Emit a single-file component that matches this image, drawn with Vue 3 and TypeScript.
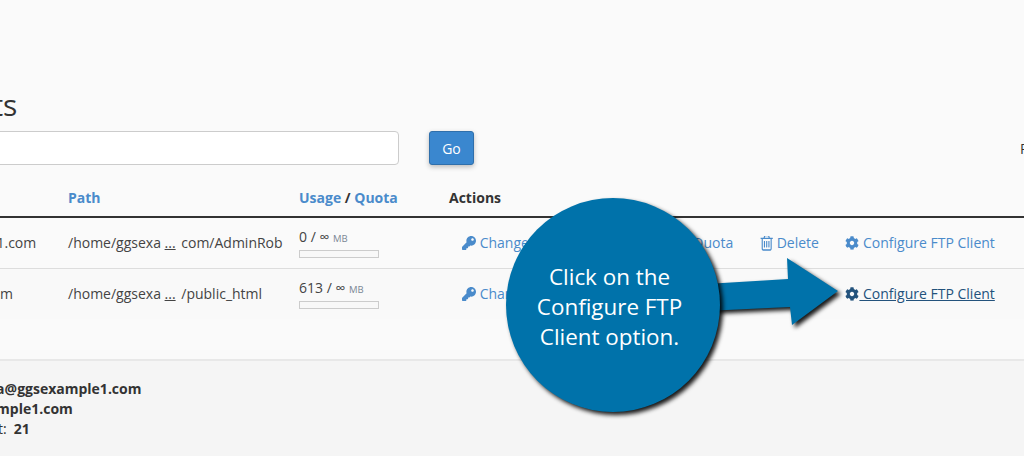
<template>
  <div class="page">
    <div class="content">
      <h1>FTP Accounts</h1>
      <div class="toolbar">
        <input class="search" type="text" />
        <button class="go">Go</button>
        <span class="page-size">Page Size</span>
      </div>
      <table>
        <colgroup>
          <col class="c-login" />
          <col class="c-path" />
          <col class="c-usage" />
          <col />
        </colgroup>
        <thead>
          <tr>
            <th><a>Log In</a></th>
            <th><a>Path</a></th>
            <th><a>Usage</a> / <a>Quota</a></th>
            <th>Actions</th>
          </tr>
        </thead>
        <tbody>
          <tr v-for="row in rows" :key="row.login">
            <td class="login">{{ row.login }}</td>
            <td class="path">{{ row.start }} <u>...</u> {{ row.end }}</td>
            <td class="usage">
              <div>{{ row.used }} / ∞ <small>MB</small></div>
              <div class="bar"></div>
            </td>
            <td class="actions">
              <a>
                <svg viewBox="0 0 512 512"><path :d="keyPath" /></svg>
                Change Password
              </a>
              <a>
                <svg viewBox="0 0 512 512"><path :d="keyPath" /></svg>
                Change Quota
              </a>
              <a>
                <svg class="trash" viewBox="128 224 1536 1472" preserveAspectRatio="none"><path :d="trashPath" /></svg>
                Delete
              </a>
              <a :class="{ hover: row.active }">
                <svg viewBox="0 0 512 512"><path :d="cogPath" /></svg>
                Configure FTP Client
              </a>
            </td>
          </tr>
        </tbody>
      </table>
      <div class="settings">
        <div class="l1"><span>FTP Username:</span> <b>ggsexa@ggsexample1.com</b></div>
        <div class="l2"><span>FTP server:</span> <b>ftp.ggsexample1.com</b></div>
        <div class="l3"><span>FTP &amp; explicit FTPS port:</span>&nbsp; <b>21</b></div>
      </div>
    </div>

    <div class="callout">
      <svg class="arrow" viewBox="0 0 340 230" width="340" height="230">
        <path d="M200 86 L282 81 L281 60 L332 93 L286 127 L284 109 L200 113 Z" />
      </svg>
      <div class="bubble">Click on the<br />Configure FTP<br />Client option.</div>
    </div>
  </div>
</template>

<script setup lang="ts">
const rows = [
  { login: 'AdminRob@ggsexample1.com', start: '/home/ggsexa', end: 'com/AdminRob', used: 0, active: false },
  { login: 'ggsexa@ggsexample1.com', start: '/home/ggsexa', end: '/public_html', used: 613, active: true }
]

const keyPath = 'M512 176.001C512 273.203 433.202 352 336 352c-11.22 0-22.19-1.062-32.827-3.069l-24.012 27.014A23.999 23.999 0 0 1 261.223 384H224v40c0 13.255-10.745 24-24 24h-40v40c0 13.255-10.745 24-24 24H24c-13.255 0-24-10.745-24-24v-78.059c0-6.365 2.529-12.47 7.029-16.971l161.802-161.802C163.108 213.814 160 195.271 160 176 160 78.798 238.797.001 335.999 0 433.488-.001 512 78.511 512 176.001zM336 128c0 26.51 21.49 48 48 48s48-21.49 48-48-21.49-48-48-48-48 21.49-48 48z'
const trashPath = 'M704 736v576q0 14-9 23t-23 9h-64q-14 0-23-9t-9-23v-576q0-14 9-23t23-9h64q14 0 23 9t9 23zm256 0v576q0 14-9 23t-23 9h-64q-14 0-23-9t-9-23v-576q0-14 9-23t23-9h64q14 0 23 9t9 23zm256 0v576q0 14-9 23t-23 9h-64q-14 0-23-9t-9-23v-576q0-14 9-23t23-9h64q14 0 23 9t9 23zm128 724v-948h-896v948q0 22 7 40.5t14.5 27 10.5 8.5h832q3 0 10.5-8.5t14.5-27 7-40.5zm-672-1076h448l-48-117q-7-9-17-11h-317q-10 2-17 11zm928 32v64q0 14-9 23t-23 9h-96v948q0 83-47 143.5t-113 60.5h-832q-66 0-113-58.5t-47-141.5v-952h-96q-14 0-23-9t-9-23v-64q0-14 9-23t23-9h309l70-167q15-37 54-63t79-26h320q40 0 79 26t54 63l70 167h309q14 0 23 9t9 23z'
const cogPath = 'M487.4 315.7l-42.6-24.6c4.3-23.2 4.3-47 0-70.2l42.6-24.6c4.9-2.8 7.1-8.6 5.5-14-11.1-35.6-30-67.8-54.7-94.6-3.8-4.1-10-5.1-14.8-2.3L380.8 110c-17.9-15.4-38.5-27.3-60.8-35.1V25.8c0-5.6-3.9-10.5-9.4-11.7-36.7-8.2-74.3-7.8-109.2 0-5.5 1.2-9.4 6.1-9.4 11.7V75c-22.2 7.9-42.8 19.8-60.8 35.1L88.7 85.5c-4.9-2.8-11-1.9-14.8 2.3-24.7 26.7-43.6 58.9-54.7 94.6-1.7 5.4.6 11.2 5.5 14L67.3 221c-4.3 23.2-4.3 47 0 70.2l-42.6 24.6c-4.9 2.8-7.1 8.6-5.5 14 11.1 35.6 30 67.8 54.7 94.6 3.8 4.1 10 5.1 14.8 2.3l42.6-24.6c17.9 15.4 38.5 27.3 60.8 35.1v49.2c0 5.6 3.9 10.5 9.4 11.7 36.7 8.2 74.3 7.8 109.2 0 5.5-1.2 9.4-6.1 9.4-11.7v-49.2c22.2-7.9 42.8-19.8 60.8-35.1l42.6 24.6c4.9 2.8 11 1.9 14.8-2.3 24.7-26.7 43.6-58.9 54.7-94.6 1.5-5.5-.7-11.3-5.6-14.1zM256 336c-44.1 0-80-35.9-80-80s35.9-80 80-80 80 35.9 80 80-35.9 80-80 80z'
</script>

<style>
html, body { margin: 0; background: #fafafa; }
</style>

<style scoped>
.page {
  position: relative;
  width: 1024px;
  height: 456px;
  overflow: hidden;
  background: #fafafa;
  font-family: "Open Sans", sans-serif;
  font-size: 14px;
  color: #333;
}
.content { margin-left: -200px; width: 1400px; padding-top: 87px; }
h1 { margin: 0; font-size: 30px; font-weight: 400; line-height: 36px; padding-left: 32px; }
.toolbar { display: flex; align-items: center; margin-top: 8px; height: 34px; }
.search {
  box-sizing: border-box;
  width: 419px;
  margin-left: 180px;
  height: 34px;
  border: 1px solid #ccc;
  border-radius: 4px;
  background: #fff;
}
.go {
  box-sizing: border-box;
  width: 45px;
  height: 34px;
  margin-left: 30px;
  border: 1px solid #2f6fab;
  border-radius: 3px;
  background: #3a87cf;
  color: #fff;
  font: 14px "Open Sans", sans-serif;
  box-shadow: 0 2px 5px rgba(0, 0, 0, 0.25);
}
.page-size { margin-left: 546px; font-size: 14px; color: #333; }
table { width: 100%; border-collapse: collapse; table-layout: fixed; margin-top: 14px; }
.c-login { width: 260px; }
.c-path { width: 231px; }
.c-usage { width: 150px; }
th {
  height: 37px;
  padding: 0 8px;
  text-align: left;
  font-weight: 700;
  border-bottom: 2px solid #333;
}
th a { color: #4a8bcb; }
td { height: 51px; padding: 0 8px; box-sizing: border-box; border-bottom: 1px solid #ddd; color: #444; white-space: nowrap; }
tbody tr:nth-child(2) td { background: #f9f9f9; border-bottom: 0; }
.login { padding-left: 38px; }
.path u { margin-right: 2px; }
.usage { font-size: 14px; line-height: 18px; padding-top: 1px; }
.usage small { font-size: 9.5px; color: #7a8794; }
.bar { box-sizing: border-box; width: 80px; height: 8px; margin-top: 2px; border: 1px solid #ccc; background: #f8f8f8; }
.actions { padding-left: 21px; }
.actions a { color: #4a8bcb; margin-right: 22.8px; }
.actions svg { width: 14px; height: 14px; fill: currentColor; vertical-align: -2px; }
.actions svg.trash { width: 13.4px; height: 15px; vertical-align: -3px; }
.actions .hover { color: #23527c; text-decoration: underline; }
.settings {
  margin-top: 40px;
  height: 100px;
  padding-top: 18px;
  border-top: 2px solid #e8e8e8;
  background: #f5f5f5;
  line-height: 20px;
}
.l1 { padding-left: 55px; }
.l2 { padding-left: 49px; }
.l3 { padding-left: 50px; }
.settings b { font-weight: 700; }
.callout { position: absolute; left: 506px; top: 198px; }
.arrow { position: absolute; left: 0; top: 0; fill: #0072aa; filter: drop-shadow(3px 3px 2px rgba(0,0,0,0.9)); overflow: visible; }
.bubble {
  position: relative;
  box-sizing: border-box;
  width: 214px;
  height: 214px;
  border-radius: 50%;
  padding: 64px 7px 0 0;
  background: #0072aa;
  color: #fff;
  text-align: center;
  font-size: 22.4px;
  line-height: 30px;
  box-shadow: 3px 3px 4px rgba(0, 0, 0, 0.9);
}
</style>
